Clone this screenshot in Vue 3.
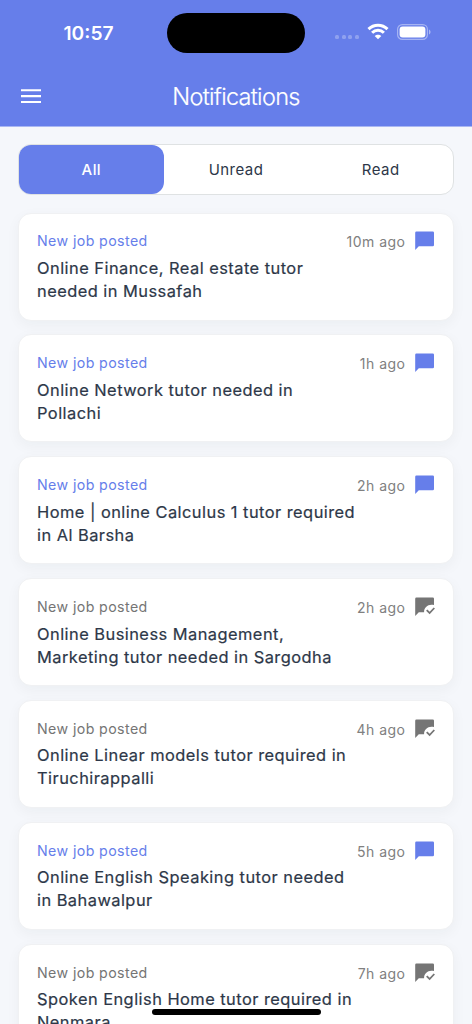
<script setup>
const tabs = ['All', 'Unread', 'Read']
const items = [
  { lines: ['Online Finance, Real estate tutor', 'needed in Mussafah'], time: '10m ago', read: false },
  { lines: ['Online Network tutor needed in', 'Pollachi'], time: '1h ago', read: false },
  { lines: ['Home | online Calculus 1 tutor required', 'in Al Barsha'], time: '2h ago', read: false },
  { lines: ['Online Business Management,', 'Marketing tutor needed in Sargodha'], time: '2h ago', read: true },
  { lines: ['Online Linear models tutor required in', 'Tiruchirappalli'], time: '4h ago', read: true },
  { lines: ['Online English Speaking tutor needed', 'in Bahawalpur'], time: '5h ago', read: false },
  { lines: ['Spoken English Home tutor required in', 'Nenmara'], time: '7h ago', read: true },
]
</script>

<template>
  <div class="screen">
    <header class="header">
      <div class="status">
        <span class="clock">10:57</span>
        <span class="island"></span>
        <div class="indicators">
          <span class="dots"><i v-for="n in 4" :key="n"></i></span>
          <svg class="wifi" width="22" height="17" viewBox="0 0 22 17" fill="none" stroke="#fff" stroke-width="3">
            <path d="M1.5 6.1C6.8.8 15.2.8 20.5 6.1" />
            <path d="M5.1 9.8c3.3-3.3 8.5-3.3 11.8 0" />
            <path d="M11 16.3 7.7 13c1.8-1.8 4.8-1.8 6.6 0Z" fill="#fff" stroke="none" />
          </svg>
          <svg class="battery" width="35" height="17" viewBox="0 0 35 17">
            <rect x=".6" y=".6" width="29.8" height="14.8" rx="4.7" fill="none" stroke="#fff" stroke-opacity=".42" stroke-width="1.2" />
            <rect x="2.6" y="2.6" width="25.8" height="10.8" rx="3" fill="#fff" />
            <path d="M32 5.5c2 .8 2 4.2 0 5Z" fill="#fff" fill-opacity=".45" />
          </svg>
        </div>
      </div>
      <div class="appbar">
        <svg class="menu" width="20" height="15" viewBox="0 0 20 15" fill="#fff">
          <path d="M0 .2h20v2.1H0zM0 6.1h20v2.1H0zM0 12h20v2.1H0z" />
        </svg>
        <h1>Notifications</h1>
        <span></span>
      </div>
    </header>

    <main>
      <nav class="tabs">
        <button v-for="(t, i) in tabs" :key="t" :class="{ active: i === 0 }">{{ t }}</button>
      </nav>
      <article v-for="item in items" :key="item.lines[0]" class="card" :class="{ read: item.read }">
        <div class="meta">
          <span class="label">New job posted</span>
          <span class="time">{{ item.time }}</span>
          <svg class="bubble" width="20" height="20" viewBox="0 0 20 20">
            <path v-if="!item.read" d="M1.4.6h16.4q1.2 0 1.2 1.2v12.3q0 1.2-1.2 1.2H3.8L.2 18.9V1.8Q.2.6 1.4.6Z" fill="currentColor" />
            <template v-else>
              <path d="M1.4.6h16.4q1.2 0 1.2 1.2v6.3C13.8 6.5 8.8 10 9.1 15.3H3.8L.2 18.9V1.8Q.2.6 1.4.6Z" fill="currentColor" />
              <path d="m11.7 13.2 2.9 2.8 4.7-5" fill="none" stroke="currentColor" stroke-width="1.8" />
            </template>
          </svg>
        </div>
        <p><span v-for="line in item.lines" :key="line">{{ line }}</span></p>
      </article>
    </main>
    <div class="home-bar"></div>
  </div>
</template>

<style>
html, body { margin: 0; overflow: hidden; background: #f5f7fb; }
</style>

<style scoped>
.screen {
  position: relative;
  width: 472px;
  height: 1024px;
  overflow: hidden;
  background: #f5f7fb;
  font-family: Inter, "Liberation Sans", sans-serif;
}
.header { border-bottom: 1px solid #a9b7f3; box-sizing: border-box; height: 127px; background: #667eea; color: #fff; }
.status {
  display: grid;
  grid-template-columns: 167px 138px 1fr;
  height: 65px;
  align-items: center;
}
.clock { padding-left: 63.5px; font-size: 19.2px; font-weight: 600; line-height: 24px; }
.island { height: 40.5px; margin-top: 1px; border-radius: 21px; background: #000; }
.indicators { display: flex; align-items: center; padding-left: 30px; }
.dots { display: flex; gap: 2.6px; width: 32px; padding-top: 9px; }
.dots i { width: 4px; height: 4px; border-radius: 1.5px; background: rgba(255, 255, 255, .27); }
.wifi { margin-top: -2px; }
.battery { margin-left: 8px; }
.appbar {
  display: grid;
  grid-template-columns: 100px 1fr 100px;
  align-items: center;
  height: 62px;
}
.menu { margin-left: 21px; }
h1 { margin: 1px 0 0; text-align: center; font-size: 23.5px; line-height: 30px; font-weight: 300; letter-spacing: -.7px; -webkit-text-stroke: .2px currentColor; }
main {
  display: flex;
  flex-direction: column;
  gap: 13.9px;
  padding: 17.4px 18px 0;
}
.tabs {
  display: grid;
  grid-template-columns: repeat(3, 1fr);
  box-sizing: border-box;
  height: 51px;
  margin-bottom: 3.3px;
  border: 1px solid #dfe2e3;
  border-radius: 13px;
  background: #fff;
}
button {
  border: 0;
  padding: 0;
  border-radius: 12px;
  background: none;
  color: #2d3748;
  font: 400 15px/20px Inter, sans-serif;
  letter-spacing: .45px;
}
.active { background: #667eea; color: #fff; font-weight: 500; }
.card {
  box-sizing: border-box;
  flex: none;
  height: 108px;
  padding: 17.8px 18px 0;
  border: 1px solid #f0f1f3;
  border-radius: 13px;
  background: #fff;
  box-shadow: 0 4px 14px rgba(30, 35, 50, .045);
  color: #667eea;
}
.read { color: #757575; }
.meta { display: flex; height: 20px; align-items: center; }
.label { flex: 1; font-size: 14.2px; line-height: 20px; letter-spacing: .4px; }
.time { padding-top: 2px; color: #808080; font-size: 14px; line-height: 18px; letter-spacing: .48px; }
.bubble { margin-left: 9.5px; }
p { margin: 5.5px 0 0; color: #2d3748; font-size: 16.4px; line-height: 23px; letter-spacing: .47px; font-weight: 400; -webkit-text-stroke: .2px currentColor; }
p span { display: block; white-space: nowrap; }
.home-bar {
  position: absolute;
  left: 151.5px;
  top: 1009.3px;
  width: 169px;
  height: 5.5px;
  border-radius: 3px;
  background: #000;
}
</style>
